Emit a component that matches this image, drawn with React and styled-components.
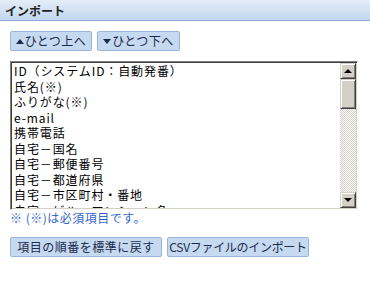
import React from "react";
import styled, { createGlobalStyle } from "styled-components";

const GlobalStyle = createGlobalStyle`
  body {
    margin: 0;
    background: #ffffff;
    font-family: "Noto Sans CJK JP", "Liberation Sans", sans-serif;
    font-size: 12px;
    color: #000000;
  }
`;

const Root = styled.div`
  width: 370px;
  height: 281px;
  display: flex;
  flex-direction: column;
`;

const Header = styled.div`
  height: 20px;
  display: flex;
  align-items: center;
  padding-left: 5px;
  background: linear-gradient(#e4edf8, #c3d6ee);
  border-bottom: 1px solid #8eaedc;
  font-weight: bold;
  font-size: 12px;
  color: #222222;
`;

const Body = styled.div`
  display: flex;
  flex-direction: column;
  padding: 10px 0 0 10px;
`;

const ButtonRow = styled.div`
  display: flex;
  gap: 5px;
  margin-top: ${(p) => p.$top || 0}px;
`;

const Button = styled.button`
  width: ${(p) => p.$w}px;
  height: 20px;
  padding: 0;
  display: flex;
  align-items: center;
  justify-content: center;
  gap: 1px;
  background: #c5d9f1;
  border: 1px solid #9ab4da;
  border-radius: 2px;
  font-family: inherit;
  font-size: 12px;
  letter-spacing: ${(p) => p.$ls ?? 0.5}px;
  white-space: nowrap;
  color: #1b2b4b;
  line-height: 1;
`;

const Arrow = styled.span`
  width: 0;
  height: 0;
  border-left: 4px solid transparent;
  border-right: 4px solid transparent;
  ${(p) =>
    p.$dir === "up"
      ? "border-bottom: 5px solid #1b2b4b;"
      : "border-top: 5px solid #1b2b4b;"}
`;

const ListBox = styled.div`
  margin-top: 10px;
  width: 348px;
  height: 149px;
  box-sizing: border-box;
  display: flex;
  border-style: solid;
  border-width: 1px;
  border-color: #808080 #ffffff #ffffff #808080;
  box-shadow: inset 1px 1px 0 #404040, inset -1px -1px 0 #d4d0c8;
  padding: 1px;
  overflow: hidden;
`;

const Items = styled.div`
  flex: 1;
  padding-left: 2px;
  overflow: hidden;
`;

const Item = styled.div`
  height: 15.5px;
  line-height: 15.5px;
  white-space: nowrap;
  font-size: 12px;
  letter-spacing: 0.9px;
`;

const ScrollBar = styled.div`
  width: 16px;
  display: flex;
  flex-direction: column;
  background-color: #ffffff;
  background-image: repeating-conic-gradient(#d4d0c8 0 25%, #ffffff 0 50%);
  background-size: 2px 2px;
`;

const ScrollPart = styled.div`
  width: 16px;
  height: ${(p) => p.$h}px;
  flex-shrink: 0;
  box-sizing: border-box;
  background: #d4d0c8;
  border-style: solid;
  border-width: 1px;
  border-color: #d4d0c8 #404040 #404040 #d4d0c8;
  box-shadow: inset 1px 1px 0 #ffffff, inset -1px -1px 0 #808080;
  display: flex;
  align-items: center;
  justify-content: center;
`;

const Track = styled.div`
  flex: 1;
`;

const ScrollArrow = styled.span`
  width: 0;
  height: 0;
  border-left: 4px solid transparent;
  border-right: 4px solid transparent;
  ${(p) =>
    p.$dir === "up"
      ? "border-bottom: 4px solid #000;"
      : "border-top: 4px solid #000;"}
`;

const Note = styled.div`
  margin-top: 1px;
  color: #3366cc;
  font-size: 12px;
  line-height: 14px;
  letter-spacing: 0.5px;
`;

const items = [
  "ID（システムID：自動発番）",
  "氏名(※)",
  "ふりがな(※)",
  "e-mail",
  "携帯電話",
  "自宅－国名",
  "自宅－郵便番号",
  "自宅－都道府県",
  "自宅－市区町村・番地",
  "自宅－ビル・マンション名",
];

export default function App() {
  return (
    <Root>
      <GlobalStyle />
      <Header>インポート</Header>
      <Body>
        <ButtonRow>
          <Button $w={82}>
            <Arrow $dir="up" />
            ひとつ上へ
          </Button>
          <Button $w={83}>
            <Arrow $dir="down" />
            ひとつ下へ
          </Button>
        </ButtonRow>
        <ListBox>
          <Items>
            {items.map((t) => (
              <Item key={t}>{t}</Item>
            ))}
          </Items>
          <ScrollBar>
            <ScrollPart $h={16}>
              <ScrollArrow $dir="up" />
            </ScrollPart>
            <ScrollPart $h={30} />
            <Track />
            <ScrollPart $h={16}>
              <ScrollArrow $dir="down" />
            </ScrollPart>
          </ScrollBar>
        </ListBox>
        <Note>※ (※)は必須項目です。</Note>
        <ButtonRow $top={12}>
          <Button $w={152}>項目の順番を標準に戻す</Button>
          <Button $w={142} $ls={-0.3}>CSVファイルのインポート</Button>
        </ButtonRow>
      </Body>
    </Root>
  );
}
